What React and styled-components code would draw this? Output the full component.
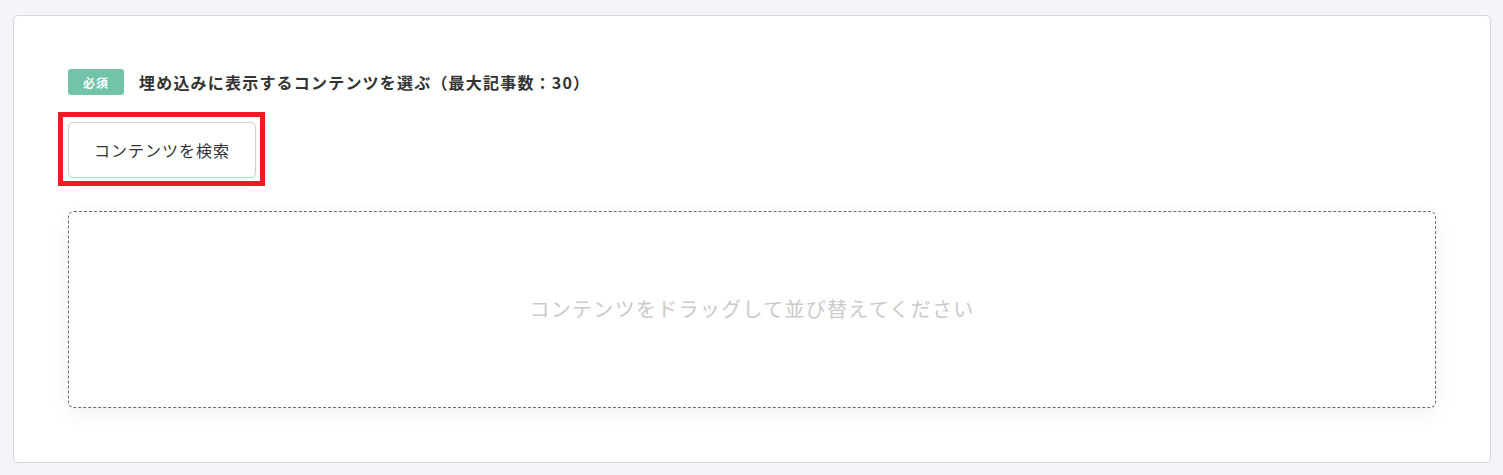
import React from "react";
import styled, { createGlobalStyle } from "styled-components";

const GlobalStyle = createGlobalStyle`
  html, body {
    margin: 0;
    padding: 0;
    background: #f4f5f9;
  }
  body {
    font-family: "Noto Sans CJK JP", "Noto Sans", sans-serif;
    color: #333;
  }
`;

const Page = styled.div`
  padding: 15px 12px 12px 13px;
`;

const Card = styled.section`
  background: #fff;
  border: 1px solid #d4d6db;
  border-radius: 5px;
  padding: 53px 54px 54px 54px;
`;

const FieldHeader = styled.div`
  display: flex;
  align-items: center;
  gap: 15px;
  height: 26px;
`;

const RequiredBadge = styled.span`
  display: inline-flex;
  align-items: center;
  justify-content: center;
  width: 56px;
  height: 26px;
  border-radius: 3px;
  background: #71c3a9;
  color: #fff;
  font-size: 12px;
  font-weight: 700;
  letter-spacing: 1px;
`;

const FieldLabel = styled.h3`
  margin: 0;
  font-size: 16px;
  font-weight: 700;
  letter-spacing: 1.2px;
  color: #333;
`;

const Highlight = styled.div`
  align-self: flex-start;
  display: inline-flex;
  margin: 17px 0 0 -10px;
  padding: 5px 4px 3px 5px;
  border: 5px solid #ec1c24;
`;

const SearchButton = styled.button`
  width: 188px;
  height: 56px;
  background: #fff;
  border: 1px solid #cfcfcf;
  border-radius: 5px;
  box-shadow: 0 2px 10px rgba(0, 0, 0, 0.04);
  font-family: inherit;
  font-size: 16px;
  letter-spacing: 1px;
  color: #333;
  cursor: pointer;
`;

const Body = styled.div`
  display: flex;
  flex-direction: column;
`;

const DropZone = styled.div`
  margin-top: 25px;
  height: 192px;
  padding-bottom: 3px;
  border: 1px dashed #6b6b6b;
  border-radius: 6px;
  box-shadow: 0 6px 20px rgba(0, 0, 0, 0.06);
  display: flex;
  align-items: center;
  justify-content: center;
  color: #cacaca;
  font-size: 20px;
  letter-spacing: 1.3px;
`;

export default function App() {
  return (
    <>
      <GlobalStyle />
      <Page>
        <Card>
          <Body>
            <FieldHeader>
              <RequiredBadge>必須</RequiredBadge>
              <FieldLabel>埋め込みに表示するコンテンツを選ぶ（最大記事数：30）</FieldLabel>
            </FieldHeader>
            <Highlight>
              <SearchButton type="button">コンテンツを検索</SearchButton>
            </Highlight>
            <DropZone>コンテンツをドラッグして並び替えてください</DropZone>
          </Body>
        </Card>
      </Page>
    </>
  );
}
